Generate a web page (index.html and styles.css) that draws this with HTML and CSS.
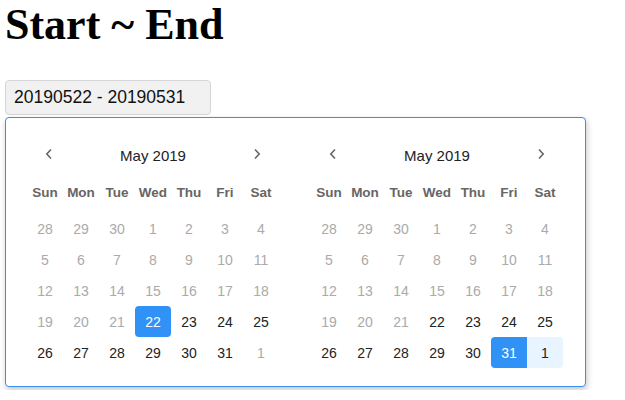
FILE: index.html
```html
<!DOCTYPE html>
<html lang="en">
<head>
  <meta charset="UTF-8">
  <meta name="viewport" content="width=device-width, initial-scale=1.0">
  <title>Start ~ End</title>
  <link rel="stylesheet" href="styles.css">
</head>
<body>
  <h1 class="title">Start ~ End</h1>
  <div class="picker">
    <input class="range-input" type="text" value="20190522 - 20190531" readonly>
    <div class="popup">
      <!-- start month -->
      <div class="month">
        <div class="month-head">
          <span class="nav"><svg width="8" height="12" viewBox="0 0 8 12"><path d="M6 1.5 1.8 6 6 10.5" fill="none" stroke="#666" stroke-width="1.6"/></svg></span>
          <span class="month-name">May 2019</span>
          <span class="nav"><svg width="8" height="12" viewBox="0 0 8 12"><path d="M2 1.5 6.2 6 2 10.5" fill="none" stroke="#666" stroke-width="1.6"/></svg></span>
        </div>
        <div class="weekdays">
          <span>Sun</span><span>Mon</span><span>Tue</span><span>Wed</span><span>Thu</span><span>Fri</span><span>Sat</span>
        </div>
        <div class="days">
          <span class="off">28</span><span class="off">29</span><span class="off">30</span><span class="off">1</span><span class="off">2</span><span class="off">3</span><span class="off">4</span>
          <span class="off">5</span><span class="off">6</span><span class="off">7</span><span class="off">8</span><span class="off">9</span><span class="off">10</span><span class="off">11</span>
          <span class="off">12</span><span class="off">13</span><span class="off">14</span><span class="off">15</span><span class="off">16</span><span class="off">17</span><span class="off">18</span>
          <span class="off">19</span><span class="off">20</span><span class="off">21</span><span class="selected">22</span><span>23</span><span>24</span><span>25</span>
          <span>26</span><span>27</span><span>28</span><span>29</span><span>30</span><span>31</span><span class="off">1</span>
        </div>
      </div>
      <!-- end month -->
      <div class="month">
        <div class="month-head">
          <span class="nav"><svg width="8" height="12" viewBox="0 0 8 12"><path d="M6 1.5 1.8 6 6 10.5" fill="none" stroke="#666" stroke-width="1.6"/></svg></span>
          <span class="month-name">May 2019</span>
          <span class="nav"><svg width="8" height="12" viewBox="0 0 8 12"><path d="M2 1.5 6.2 6 2 10.5" fill="none" stroke="#666" stroke-width="1.6"/></svg></span>
        </div>
        <div class="weekdays">
          <span>Sun</span><span>Mon</span><span>Tue</span><span>Wed</span><span>Thu</span><span>Fri</span><span>Sat</span>
        </div>
        <div class="days">
          <span class="off">28</span><span class="off">29</span><span class="off">30</span><span class="off">1</span><span class="off">2</span><span class="off">3</span><span class="off">4</span>
          <span class="off">5</span><span class="off">6</span><span class="off">7</span><span class="off">8</span><span class="off">9</span><span class="off">10</span><span class="off">11</span>
          <span class="off">12</span><span class="off">13</span><span class="off">14</span><span class="off">15</span><span class="off">16</span><span class="off">17</span><span class="off">18</span>
          <span class="off">19</span><span class="off">20</span><span class="off">21</span><span>22</span><span>23</span><span>24</span><span>25</span>
          <span>26</span><span>27</span><span>28</span><span>29</span><span>30</span><span class="selected end">31</span><span class="in-range">1</span>
        </div>
      </div>
    </div>
  </div>
</body>
</html>
```

FILE: styles.css
```css
body {
  margin: 0;
  padding: 3px 5px;
  background-color: #fff;
  font-family: "Liberation Sans", Arial, sans-serif;
}

.title {
  margin: 0 0 33px;
  font-family: "Liberation Serif", "Times New Roman", serif;
  font-size: 44px;
  line-height: 44px;
  font-weight: bold;
  color: #000;
}

.picker {
  display: flex;
  flex-direction: column;
  align-items: flex-start;
}

.range-input {
  width: 206px;
  height: 35px;
  box-sizing: border-box;
  padding: 0 8px;
  border: 1px solid #d6d6d6;
  border-radius: 4px;
  background-color: #f1f1f1;
  font-family: "Liberation Sans", Arial, sans-serif;
  font-size: 17.5px;
  color: #111;
  outline: none;
}

.popup {
  display: flex;
  gap: 32px;
  margin-top: 2px;
  padding: 20px 22px 18px 21px;
  border: 1px solid #3a8ef0;
  border-radius: 4px;
  background-color: #fff;
  box-shadow: 1px 3px 6px rgba(0, 0, 0, 0.22);
}

.month {
  width: 252px;
}

.month-head {
  display: flex;
  align-items: center;
  justify-content: space-between;
  height: 34px;
  padding: 0 18px;
}

.nav {
  display: flex;
  width: 8px;
  height: 12px;
  margin-top: -3px;
}

.month-name {
  font-size: 15px;
  color: #222;
}

.weekdays {
  display: grid;
  grid-template-columns: repeat(7, 36px);
  height: 32px;
  margin: 4px 0 5px;
  align-items: center;
  font-size: 13.5px;
  font-weight: bold;
  color: #666;
}

.weekdays span,
.days span {
  text-align: center;
}

.days {
  display: grid;
  grid-template-columns: repeat(7, 36px);
  grid-auto-rows: 31px;
  font-size: 14px;
  color: #222;
}

.days span {
  display: flex;
  align-items: center;
  justify-content: center;
  border-radius: 4px;
}

.days .off {
  color: #aaa;
}

.days .selected {
  background-color: #3091f7;
  color: #fff;
}

.days .end {
  border-radius: 4px 0 0 4px;
}

.days .in-range {
  background-color: #e8f4ff;
  border-radius: 0 4px 4px 0;
}
```
